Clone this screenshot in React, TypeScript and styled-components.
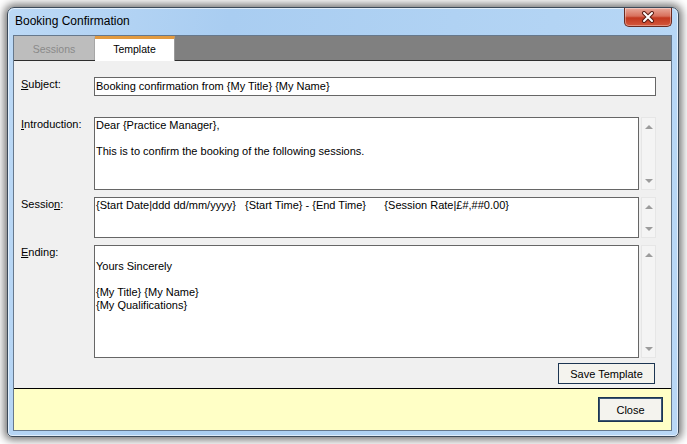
import React from 'react';
import styled, { createGlobalStyle } from 'styled-components';

const GlobalStyle = createGlobalStyle`
  body {
    margin: 0;
    background: #ffffff;
    font-family: "Liberation Sans", Arial, sans-serif;
    font-size: 11px;
    color: #000;
  }
`;

const Desktop = styled.div`
  width: 687px;
  height: 444px;
  padding: 7px;
  box-sizing: border-box;
  overflow: hidden;
`;

const Window = styled.div`
  box-sizing: border-box;
  width: 672px;
  height: 430px;
  border: 1px solid #3c4a59;
  border-radius: 7px 7px 5px 5px;
  background: linear-gradient(100deg, #bcd9f6 0%, #a9cdf1 30%, #b0d2f3 60%, #b9d8f6 100%);
  box-shadow: 0 0 8px 3px rgba(0, 0, 0, 0.55), inset 0 0 0 1px rgba(255, 255, 255, 0.6);
  padding: 0 6px 5px 5px;
  display: flex;
  flex-direction: column;
`;

const TitleBar = styled.div`
  height: 27px;
  display: flex;
  justify-content: space-between;
  align-items: flex-start;
`;

const Title = styled.span`
  font-size: 12px;
  line-height: 14px;
  padding: 6px 0 0 2px;
  color: #000;
`;

const CloseCaption = styled.div`
  width: 48px;
  height: 19px;
  box-sizing: border-box;
  border: 1px solid #6b2a20;
  border-top: none;
  border-radius: 0 0 5px 5px;
  background: linear-gradient(180deg, #e9a99b 0%, #d8705c 45%, #c2381f 55%, #d4583d 100%);
  box-shadow: inset 0 0 0 1px rgba(255, 255, 255, 0.35);
  display: flex;
  align-items: center;
  justify-content: center;
`;

const Client = styled.div`
  flex: 1;
  min-height: 0;
  border: 1px solid #66788c;
  background: #f0f0f0;
  display: flex;
  flex-direction: column;
`;

const TabStrip = styled.div`
  height: 24px;
  background: #808080;
  border-bottom: 1px solid #2e2e2e;
  display: flex;
`;

const Tab = styled.div<{ $active?: boolean }>`
  box-sizing: border-box;
  width: ${(p) => (p.$active ? '80px' : '81px')};
  display: flex;
  align-items: center;
  justify-content: center;
  font-size: 10.5px;
  color: ${(p) => (p.$active ? '#000' : '#8a8a8a')};
  background: ${(p) => (p.$active ? '#ffffff' : '#bdbdbd')};
  border-top: 3px solid ${(p) => (p.$active ? '#e39a3f' : '#bdbdbd')};
  border-right: 1px solid ${(p) => (p.$active ? '#9a9a9a' : '#a6a6a6')};
  margin-bottom: ${(p) => (p.$active ? '-1px' : '0')};
  padding-bottom: 2px;
`;

const Panel = styled.div`
  flex: 1;
  padding: 16px 15px 0 0;
  display: flex;
  flex-direction: column;
`;

const Row = styled.div<{ $gap: number }>`
  display: grid;
  grid-template-columns: 80px 1fr;
  margin-top: ${(p) => p.$gap}px;
`;

const Label = styled.label`
  padding: 1px 0 0 7px;
  line-height: 13px;
  color: #000;
`;

const Field = styled.div`
  display: flex;
  gap: 2px;
`;

const TextBox = styled.div<{ $height: number; $single?: boolean }>`
  flex: 1;
  box-sizing: border-box;
  height: ${(p) => p.$height}px;
  background: #ffffff;
  border: 1px solid #666666;
  padding: ${(p) => (p.$single ? '0 1px' : '1px 1px')};
  line-height: ${(p) => (p.$single ? '17px' : '13px')};
  white-space: pre;
  overflow: hidden;
`;

const ScrollBar = styled.div`
  width: 15px;
  box-sizing: border-box;
  background: #f4f4f4;
  border: 1px solid #e6e6e6;
  display: flex;
  flex-direction: column;
  justify-content: space-between;
  align-items: center;
  padding: 7px 0 6px;
`;

const Arrow = styled.span<{ $down?: boolean }>`
  width: 0;
  height: 0;
  border-left: 4px solid transparent;
  border-right: 4px solid transparent;
  ${(p) => (p.$down ? 'border-top: 4px solid #9c9c9c;' : 'border-bottom: 4px solid #9c9c9c;')}
`;

const ButtonRow = styled.div`
  display: flex;
  justify-content: flex-end;
  margin-top: 5px;
  padding-right: 1px;
`;

const Button = styled.button<{ $default?: boolean; $w: number; $h: number }>`
  width: ${(p) => p.$w}px;
  height: ${(p) => p.$h}px;
  box-sizing: border-box;
  font-family: "Liberation Sans", Arial, sans-serif;
  font-size: 11px;
  color: #000;
  background: #f4f3ee;
  border: 1px solid #1c3552;
  box-shadow: ${(p) => (p.$default ? 'inset 0 0 0 1px #3a5674' : 'none')};
  padding: 0;
`;

const Footer = styled.div`
  height: 41px;
  border-top: 1px solid #000;
  background: #ffffc6;
  display: flex;
  justify-content: flex-end;
  align-items: center;
  padding-right: 8px;
`;

const Scroll = () => (
  <ScrollBar>
    <Arrow />
    <Arrow $down />
  </ScrollBar>
);

const App = (): JSX.Element => {
  return (
    <>
      <GlobalStyle />
      <Desktop>
        <Window>
          <TitleBar>
            <Title>Booking Confirmation</Title>
            <CloseCaption>
              <svg width="14" height="12" viewBox="0 0 14 12">
                <path d="M3 2 L11 10 M11 2 L3 10" stroke="#5a1d14" strokeWidth="4" strokeLinecap="round" />
                <path d="M3 2 L11 10 M11 2 L3 10" stroke="#ffffff" strokeWidth="2" strokeLinecap="round" />
              </svg>
            </CloseCaption>
          </TitleBar>
          <Client>
            <TabStrip>
              <Tab>Sessions</Tab>
              <Tab $active>Template</Tab>
            </TabStrip>
            <Panel>
              <Row $gap={0}>
                <Label>
                  <u>S</u>ubject:
                </Label>
                <TextBox $height={19} $single>
                  Booking confirmation from {'{My Title}'} {'{My Name}'}
                </TextBox>
              </Row>
              <Row $gap={21}>
                <Label>
                  <u>I</u>ntroduction:
                </Label>
                <Field>
                  <TextBox $height={73}>
                    {'Dear {Practice Manager},\n\nThis is to confirm the booking of the following sessions.'}
                  </TextBox>
                  <Scroll />
                </Field>
              </Row>
              <Row $gap={7}>
                <Label>
                  Sessio<u>n</u>:
                </Label>
                <Field>
                  <TextBox $height={41}>
                    {'{Start Date|ddd dd/mm/yyyy}   {Start Time} - {End Time}      {Session Rate|£#,##0.00}'}
                  </TextBox>
                  <Scroll />
                </Field>
              </Row>
              <Row $gap={7}>
                <Label>
                  <u>E</u>nding:
                </Label>
                <Field>
                  <TextBox $height={113}>
                    {'\nYours Sincerely\n\n{My Title} {My Name}\n{My Qualifications}'}
                  </TextBox>
                  <Scroll />
                </Field>
              </Row>
              <ButtonRow>
                <Button $w={97} $h={21}>Save Template</Button>
              </ButtonRow>
            </Panel>
            <Footer>
              <Button $default $w={65} $h={25}>
                Close
              </Button>
            </Footer>
          </Client>
        </Window>
      </Desktop>
    </>
  );
};

export default App;
